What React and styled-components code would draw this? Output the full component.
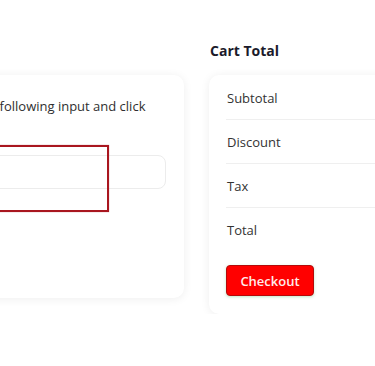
import React from 'react';
import styled, { createGlobalStyle } from 'styled-components';

const GlobalStyle = createGlobalStyle`
  html, body {
    margin: 0;
    padding: 0;
    background: #ffffff;
    overflow: hidden;
  }
  body {
    font-family: "Open Sans", "Liberation Sans", sans-serif;
    color: #333;
  }
`;

const COUPON_WIDTH = 389;

const Page = styled.div`
  display: flex;
  align-items: flex-start;
  gap: 25px;
  padding-top: 41px;
  margin-left: ${184 - COUPON_WIDTH}px;
  width: 800px;
`;

const Column = styled.section`
  display: flex;
  flex-direction: column;
  flex: 0 0 ${(p) => p.$width}px;
`;

const Title = styled.h2`
  margin: 0 0 14px 1px;
  font-size: 14px;
  line-height: 20px;
  font-weight: 700;
  color: #1b1b2b;
`;

const Card = styled.div`
  position: relative;
  background: #fff;
  border-radius: 10px;
  box-shadow: 0 1px 10px rgba(0, 0, 0, 0.07);
  padding: ${(p) => p.$padding};
  min-height: ${(p) => p.$minHeight || 0}px;
  box-sizing: border-box;
`;

const Hint = styled.p`
  margin: 0;
  font-size: 13px;
  line-height: 20px;
  color: #2f2f2f;
`;

const CouponInput = styled.input`
  display: block;
  width: 100%;
  height: 34px;
  margin-top: 19px;
  box-sizing: border-box;
  border: 1px solid #ececec;
  border-radius: 8px;
  background: #fff;
  padding: 0 12px;
  font: inherit;
  font-size: 13px;
  outline: none;
`;

const ApplyButton = styled.button`
  margin-top: 16px;
  height: 32px;
  padding: 0 18px;
  border: none;
  border-radius: 4px;
  background: #1b1b2b;
  color: #fff;
  font: inherit;
  font-size: 13px;
`;

// highlight frame drawn over the coupon input
const Highlight = styled.div`
  position: absolute;
  top: 70px;
  left: 120px;
  right: 75px;
  height: 67px;
  box-sizing: border-box;
  border: 2px solid #a9161f;
  box-shadow: 0 0 1px rgba(169, 22, 31, 0.5);
  pointer-events: none;
`;

const Row = styled.div`
  display: flex;
  align-items: center;
  height: 43px;
  font-size: 13px;
  color: #333;
  border-bottom: ${(p) => (p.$last ? 'none' : '1px solid #efefef')};
  padding-left: 1px;
`;

const CheckoutButton = styled.button`
  margin-top: 14px;
  width: 88px;
  height: 31px;
  border: 1px solid #b50a0a;
  border-radius: 4px;
  background: #ff0000;
  color: #ffecec;
  font-family: inherit;
  font-size: 13px;
  font-weight: 600;
  box-shadow: 0 1px 3px rgba(40, 170, 70, 0.3);
  cursor: pointer;
`;

const rows = ['Subtotal', 'Discount', 'Tax', 'Total'];

export default function App() {
  return (
    <>
      <GlobalStyle />
      <Page>
        <Column $width={COUPON_WIDTH}>
          <Title>Apply Coupon</Title>
          <Card $padding="21px 18px 18px" $minHeight={223}>
            <Hint>Enter your coupon code in the following input and click apply.</Hint>
            <CouponInput type="text" />
            <ApplyButton type="button">Apply</ApplyButton>
            <Highlight />
          </Card>
        </Column>
        <Column $width={200}>
          <Title>Cart Total</Title>
          <Card $padding="1px 17px 18px">
            {rows.map((label, i) => (
              <Row key={label} $last={i === rows.length - 1}>
                {label}
              </Row>
            ))}
            <CheckoutButton type="button">Checkout</CheckoutButton>
          </Card>
        </Column>
      </Page>
    </>
  );
}
